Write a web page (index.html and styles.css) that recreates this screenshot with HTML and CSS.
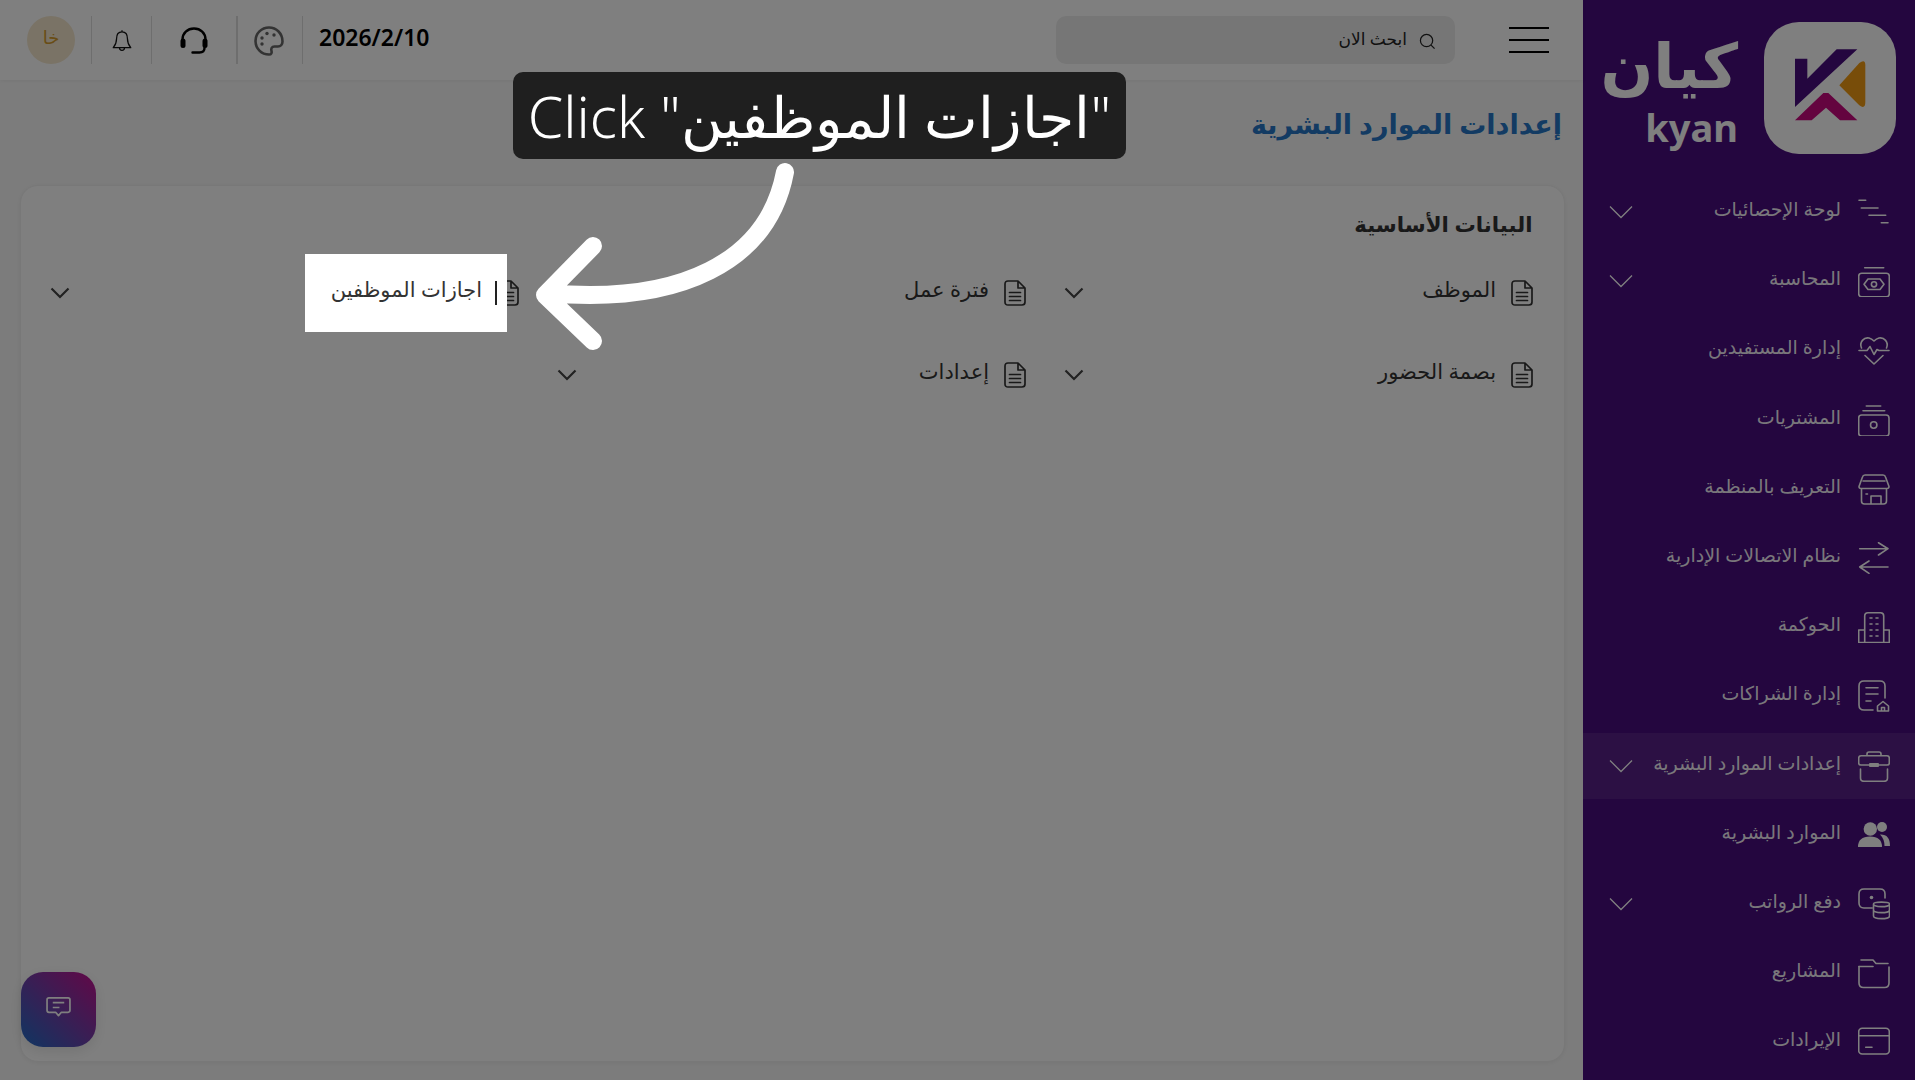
FILE: index.html
```html
<!DOCTYPE html>
<html lang="ar" dir="rtl">
<head>
    <meta charset="UTF-8">
    <meta name="viewport" content="width=device-width, initial-scale=1.0">
    <title>kyan</title>
    <link rel="stylesheet" href="styles.css">
</head>
<body>
    <div class="layout">
        <aside class="sidebar">
            <div class="brand">
                <svg class="brand-mark" viewBox="552 65 396 396">
                    <rect x="552" y="65" width="396" height="396" rx="105" fill="#fff"/>
                    <polygon points="645,175 682,175 682,235 770,147 832,147 645,320" fill="#480c7e"/>
                    <path d="M778 255 L838 188 Q856 175 856 195 V305 Q856 328 838 315 Z" fill="#f09a12"/>
                    <polygon points="645,360 730,278 745,278 832,360 780,360 738,322 695,360" fill="#c8087e"/>
                </svg>
                <div class="brand-name">
                    <span class="brand-ar">كيان</span>
                    <span class="brand-en">kyan</span>
                </div>
            </div>
            <nav class="menu">
                <a class="menu-item">
                    <svg class="menu-icon" viewBox="0 0 32 32"><path d="M1 4.3H7.7M3.3 12H20M11 19.3H27.7M23.3 26.7H30"/></svg>
                    <span class="menu-label">لوحة الإحصائيات</span>
                    <svg class="menu-arrow" viewBox="0 0 24 14"><path d="M1 1.5L12 12.5L23 1.5"/></svg>
                </a>
                <a class="menu-item">
                    <svg class="menu-icon" viewBox="0 0 32 32"><path d="M6.7 2.7H25.7M6 19.3L10 14H22L26 19.3L22 24.5H10Z"/><rect x="0.7" y="8.3" width="30.6" height="23.4" rx="3"/><circle cx="16" cy="19.3" r="2.6"/></svg>
                    <span class="menu-label">المحاسبة</span>
                    <svg class="menu-arrow" viewBox="0 0 24 14"><path d="M1 1.5L12 12.5L23 1.5"/></svg>
                </a>
                <a class="menu-item">
                    <svg class="menu-icon" viewBox="0 0 32 32"><path d="M3.5 14C1 8 6 3 11 4C13 4.5 15 6 16 7C17 6 19 4.5 21 4C26 3 31 8 28.5 14M1 16.5H9L12 12.5L16 20.5L19 15.5L21 16.5H31M7 21.5L16 30L25 21.5"/></svg>
                    <span class="menu-label">إدارة المستفيدين</span>
                </a>
                <a class="menu-item">
                    <svg class="menu-icon" viewBox="0 0 32 32"><path d="M8.3 2H22.7M5 6.7H26.7"/><rect x="0.7" y="11" width="30.3" height="21" rx="3"/><circle cx="15.7" cy="21" r="3.2"/></svg>
                    <span class="menu-label">المشتريات</span>
                </a>
                <a class="menu-item">
                    <svg class="menu-icon" viewBox="0 0 32 32"><path d="M7 2H25Q27 2 27.5 4L31 13.5Q31 15.5 29 15.5H3Q1 15.5 1 13.5L4.500 4Q5 2 7 2ZM5 8H27M3.500 15.500V28Q3.500 31 6.500 31H25.500Q28.500 31 28.500 28V15.500M13 31V23H23V31M8 21H9.500"/></svg>
                    <span class="menu-label">التعريف بالمنظمة</span>
                </a>
                <a class="menu-item">
                    <svg class="menu-icon" viewBox="0 0 32 32"><path d="M1.700 6.700H30L20.500 0.700M30 6.700L20.500 13M30 25H1.700L11 19M1.700 25L11 31.300"/></svg>
                    <span class="menu-label">نظام الاتصالات الإدارية</span>
                </a>
                <a class="menu-item">
                    <svg class="menu-icon" viewBox="0 0 32 32"><path d="M6.700 31.500V5Q6.700 1.700 10 1.700H22.500Q25.700 1.700 25.700 5V31.500M0.700 31.500H31.300M0.700 31.500V19H6.700M31.300 31.500V19H25.700"/><path class="dash" d="M12 7H20M12 13H20M12 19H20M12 25H20"/></svg>
                    <span class="menu-label">الحوكمة</span>
                </a>
                <a class="menu-item">
                    <svg class="menu-icon" viewBox="0 0 32 32"><path d="M27 18V6Q27 1 22 1H6Q1 1 1 6V25Q1 30 6 30H15M8 7.700H20M8 14H20M8 21H13M19.500 31V26L25 21.500L30.500 26V31ZM23.500 31V27.500H26.500V31"/></svg>
                    <span class="menu-label">إدارة الشراكات</span>
                </a>
                <a class="menu-item menu-item-active">
                    <svg class="menu-icon" viewBox="0 0 32 32"><path d="M9 5.700V4Q9 2 11 2H21Q23 2 23 4V5.700M11 15H3Q0.700 15 0.700 13V8Q0.700 5.700 3 5.700H29Q31.300 5.700 31.300 8V13Q31.300 15 29 15H21M2.500 19V28Q2.500 31.300 6 31.300H26Q29.500 31.300 29.500 28V19"/><rect class="fill" x="11" y="13" width="10" height="4" rx="1"/></svg>
                    <span class="menu-label">إعدادات الموارد البشرية</span>
                    <svg class="menu-arrow" viewBox="0 0 24 14"><path d="M1 1.500L12 12.500L23 1.500"/></svg>
                </a>
                <a class="menu-item">
                    <svg class="menu-icon" viewBox="0 0 32 32"><circle class="fill" cx="12.300" cy="10" r="6.700"/><circle class="fill" cx="24" cy="8" r="5"/><path class="fill" d="M0 28Q0 17.500 12 17.500Q24 17.500 24 28ZM22 15.500Q32 15 32 27H26.500Q26.500 20 22 15.500Z"/></svg>
                    <span class="menu-label">الموارد البشرية</span>
                </a>
                <a class="menu-item">
                    <svg class="menu-icon" viewBox="0 0 32 32"><path d="M14 20H6Q1 20 1 15V6Q1 1 6 1H22Q27 1 27 6V10M15.500 16C15.500 13.500 31.500 13.500 31.500 16C31.500 19.500 15.500 19.500 15.500 16ZM15.500 16V28C15.500 31.500 31.500 31.500 31.500 28V16M15.500 22C15.500 25.500 31.500 25.500 31.500 22"/><circle class="fill" cx="13.500" cy="9.500" r="1.800"/></svg>
                    <span class="menu-label">دفع الرواتب</span>
                    <svg class="menu-arrow" viewBox="0 0 24 14"><path d="M1 1.500L12 12.500L23 1.500"/></svg>
                </a>
                <a class="menu-item">
                    <svg class="menu-icon" viewBox="0 0 32 32"><path d="M3 3H15L18 6.500H30M1 9.500V26Q1 30.500 5.500 30.500H26.500Q31 30.500 31 26V10"/><path d="M1 9.500H15"/></svg>
                    <span class="menu-label">المشاريع</span>
                </a>
                <a class="menu-item">
                    <svg class="menu-icon" viewBox="0 0 32 32"><rect x="0.700" y="2.300" width="30.600" height="25.700" rx="3.500"/><path d="M0.700 9.700H31.300M7.700 21.300H14"/></svg>
                    <span class="menu-label">الإيرادات</span>
                </a>
            </nav>
        </aside>

        <div class="main">
            <header class="topbar">
                <div class="topbar-right">
                    <div class="burger"><i></i><i></i><i></i></div>
                    <div class="search">
                        <svg class="search-icon" viewBox="0 0 18 18"><circle cx="8" cy="8" r="6.500"/><path d="M12.800 12.800L16.500 16.500"/></svg>
                        <span class="search-text">ابحث الان</span>
                    </div>
                </div>
                <div class="topbar-left">
                    <div class="date" dir="ltr">2026/2/10</div>
                    <div class="tool tool-palette">
                        <svg viewBox="0 0 30 30" width="30" height="30">
                            <path class="palette" d="M15 1.500C7.500 1.500 1.500 7.500 1.500 15C1.500 22.500 7.500 28.500 15 28.500C17.500 28.500 18 26.500 17.500 25C16.800 23 17.500 20.500 20.500 20.500H24C26.500 20.500 28.500 18.500 28.500 15.500C28.500 7.500 22.500 1.500 15 1.500Z"/>
                            <circle cx="8" cy="12" r="1.700"/><circle cx="8" cy="18" r="1.700"/><circle cx="13" cy="7.500" r="1.700"/><circle cx="20" cy="9" r="1.700"/>
                        </svg>
                    </div>
                    <div class="tool tool-support">
                        <svg viewBox="0 0 30 30" width="30" height="30">
                            <path class="headset" d="M3.500 19V13.500C3.500 7 8.500 2.500 15 2.500C21.500 2.500 26.500 7 26.500 13.500V19"/>
                            <rect x="1.500" y="12.500" width="5" height="9.500" rx="2.500"/>
                            <rect x="23.500" y="12.500" width="5" height="9.500" rx="2.500"/>
                            <path class="headset" d="M25.500 22C25.500 25 24 26.500 20.500 26.500H13.500"/>
                        </svg>
                    </div>
                    <div class="tool tool-bell">
                        <svg viewBox="0 0 24 28" width="20" height="24">
                            <path d="M12 3C7.500 3 5.500 6.500 5.500 11C5.500 16 4 19 1.500 22H22.500C20 19 18.500 16 18.500 11C18.500 6.500 16.500 3 12 3ZM12 1V3M9 22.500C9 26 15 26 15 22.500"/>
                        </svg>
                    </div>
                    <div class="avatar">خا</div>
                </div>
            </header>

            <div class="page-head">
                <h1 class="page-title">إعدادات الموارد البشرية</h1>
            </div>

            <section class="card">
                <h2 class="card-title">البيانات الأساسية</h2>
                <div class="grid">
                    <div class="item">
                        <svg class="doc" viewBox="0 0 22 26"><path d="M4 1H14L21 8V22Q21 25 18 25H4Q1 25 1 22V4Q1 1 4 1ZM14 1V8H21M5.500 12.500H16.500M5.500 16.500H16.500M5.500 20.500H16.500"/></svg>
                        <span class="item-label">الموظف</span>
                        <svg class="chev" viewBox="0 0 20 12"><path d="M1.500 1.500L10 10L18.500 1.500"/></svg>
                    </div>
                    <div class="item">
                        <svg class="doc" viewBox="0 0 22 26"><path d="M4 1H14L21 8V22Q21 25 18 25H4Q1 25 1 22V4Q1 1 4 1ZM14 1V8H21M5.500 12.500H16.500M5.500 16.500H16.500M5.500 20.500H16.500"/></svg>
                        <span class="item-label">فترة عمل</span>
                        <svg class="chev" viewBox="0 0 20 12"><path d="M1.500 1.500L10 10L18.500 1.500"/></svg>
                    </div>
                    <div class="item item-focus">
                        <svg class="doc" viewBox="0 0 22 26"><path d="M4 1H14L21 8V22Q21 25 18 25H4Q1 25 1 22V4Q1 1 4 1ZM14 1V8H21M5.500 12.500H16.500M5.500 16.500H16.500M5.500 20.500H16.500"/></svg>
                        <span class="item-label">اجازات الموظفين</span>
                        <i class="caret"></i>
                        <svg class="chev" viewBox="0 0 20 12"><path d="M1.500 1.500L10 10L18.500 1.500"/></svg>
                    </div>
                    <div class="item">
                        <svg class="doc" viewBox="0 0 22 26"><path d="M4 1H14L21 8V22Q21 25 18 25H4Q1 25 1 22V4Q1 1 4 1ZM14 1V8H21M5.500 12.500H16.500M5.500 16.500H16.500M5.500 20.500H16.500"/></svg>
                        <span class="item-label">بصمة الحضور</span>
                        <svg class="chev" viewBox="0 0 20 12"><path d="M1.500 1.500L10 10L18.500 1.500"/></svg>
                    </div>
                    <div class="item">
                        <svg class="doc" viewBox="0 0 22 26"><path d="M4 1H14L21 8V22Q21 25 18 25H4Q1 25 1 22V4Q1 1 4 1ZM14 1V8H21M5.500 12.500H16.500M5.500 16.500H16.500M5.500 20.500H16.500"/></svg>
                        <span class="item-label">إعدادات</span>
                        <svg class="chev" viewBox="0 0 20 12"><path d="M1.500 1.500L10 10L18.500 1.500"/></svg>
                    </div>
                </div>
            </section>
        </div>
    </div>

    <button class="chat-btn">
        <svg viewBox="0 0 26 22" width="25" height="21"><path d="M3 1H23Q25 1 25 3V14Q25 16 23 16H16L13 19.500L10 16H3Q1 16 1 14V3Q1 1 3 1ZM7 6H19M7 11H14"/></svg>
    </button>

    <!-- tour overlay -->
    <div class="spot"></div>
    <div class="tip" dir="ltr">Click "اجازات الموظفين"</div>
    <svg class="tour-arrow" viewBox="0 0 1915 1080">
        <path d="M785 172C768 262 680 305 547 293M593 246L545 295L593 341"/>
    </svg>
</body>
</html>
```

FILE: styles.css
```css
* {
    margin: 0;
    padding: 0;
    box-sizing: border-box;
}

html, body {
    height: 100%;
    overflow: hidden;
}

body {
    position: relative;
    font-family: "Noto Sans", "DejaVu Sans", sans-serif;
    background: #f9f9f9;
    color: #333;
}

.layout {
    display: flex;
    height: 1080px;
}

/* sidebar */
.sidebar {
    width: 332px;
    flex-shrink: 0;
    background: #480c7e;
    color: #fff;
    overflow: hidden;
}

.brand {
    height: 179px;
    display: flex;
    align-items: flex-start;
    padding: 22px 19px 0 0;
    gap: 26px;
}

.brand-mark {
    width: 132px;
    height: 132px;
    flex-shrink: 0;
}

.brand-name {
    display: flex;
    flex-direction: column;
    align-items: flex-start;
    color: #fff;
    font-weight: 700;
}

.brand-ar {
    font-size: 62px;
    line-height: 84px;
}

.brand-en {
    font-size: 38px;
    line-height: 42px;
}

.menu {
    display: flex;
    flex-direction: column;
    gap: 3.2px;
}

.menu-item {
    height: 66px;
    flex-shrink: 0;
    display: flex;
    align-items: center;
    padding: 0 25px 0 26px;
    gap: 17px;
}

.menu-item-active {
    background: rgba(255, 255, 255, 0.09);
}

.menu-icon {
    width: 32px;
    height: 32px;
    flex-shrink: 0;
    fill: none;
    stroke: #fff;
    stroke-width: 1.6;
    stroke-linecap: round;
    stroke-linejoin: round;
}

.menu-icon .fill {
    fill: #fff;
    stroke: none;
}

.menu-icon .dash {
    stroke-dasharray: 2 4;
}

.menu-label {
    font-size: 19px;
    color: rgba(255, 255, 255, 0.95);
    margin-top: -6px;
}

.menu-arrow {
    width: 24px;
    height: 14px;
    margin-right: auto;
    fill: none;
    stroke: #fff;
    stroke-width: 1.3;
}

/* main */
.main {
    flex: 1;
    display: flex;
    flex-direction: column;
    min-width: 0;
}

.topbar {
    height: 80px;
    flex-shrink: 0;
    display: flex;
    justify-content: space-between;
    align-items: center;
    background: #fff;
    padding: 0 34px 0 27px;
    box-shadow: 0 1px 4px rgba(0, 0, 0, 0.06);
}

.topbar-right {
    display: flex;
    align-items: center;
    gap: 54px;
}

.burger {
    width: 40px;
    display: flex;
    flex-direction: column;
    gap: 10.5px;
}

.burger i {
    display: block;
    height: 1.5px;
    background: #000;
}

.search {
    width: 399px;
    height: 48px;
    background: #ededed;
    border-radius: 10px;
    display: flex;
    align-items: center;
    padding-right: 19px;
    gap: 12px;
    font-size: 17px;
    color: #222;
}

.search-text {
    margin-top: -4px;
}

.search-icon {
    width: 17px;
    height: 17px;
    margin-top: 3px;
    fill: none;
    stroke: #222;
    stroke-width: 1.3;
}

.topbar-left {
    display: flex;
    align-items: center;
}

.date {
    font-size: 23px;
    font-weight: 600;
    color: #000;
    margin: -7px 0 0 16px;
}

.tool {
    height: 48px;
    display: flex;
    align-items: center;
    justify-content: center;
    border-right: 1px solid #ddd;
}

.tool svg {
    margin-top: 2px;
}

.tool-palette {
    width: 65px;
}

.tool-palette svg {
    fill: #666;
    margin-right: 2px;
}

.palette {
    fill: none;
    stroke: #666;
    stroke-width: 2.6;
}

.tool-support {
    width: 86px;
    border-right-width: 2px;
}

.tool-support svg {
    fill: #000;
}

.headset {
    fill: none;
    stroke: #000;
    stroke-width: 2.4;
    stroke-linecap: round;
}

.tool-bell {
    width: 61px;
    border-left: 1px solid #ddd;
}

.tool-bell svg {
    fill: none;
    stroke: #111;
    stroke-width: 1.5;
    stroke-linejoin: round;
}

.avatar {
    width: 48px;
    height: 48px;
    margin-right: 16px;
    border-radius: 50%;
    background: #f4e7cd;
    color: #d39a2b;
    display: flex;
    align-items: center;
    justify-content: center;
    font-size: 18px;
    padding-bottom: 6px;
}

.page-head {
    height: 105px;
    flex-shrink: 0;
    padding: 21px 21px 0 0;
}

.page-title {
    font-size: 27px;
    font-weight: 600;
    color: #2777c7;
    line-height: 46px;
}

.card {
    flex: 1;
    margin: 0 18px 18px 20px;
    background: #fff;
    border: 1px solid #f0f0f0;
    border-radius: 18px;
    box-shadow: 0 1px 5px rgba(0, 0, 0, 0.06);
    padding: 19px 31.5px 0 0;
}

.card-title {
    font-size: 21.3px;
    font-weight: 600;
    color: #333;
    line-height: 38px;
}

.grid {
    display: grid;
    grid-template-columns: repeat(3, 468.5px);
    column-gap: 38.5px;
    row-gap: 42px;
    margin-top: 30px;
}

.item {
    position: relative;
    height: 40px;
    display: flex;
    align-items: center;
    gap: 14.5px;
}

.doc {
    width: 22px;
    height: 26px;
    fill: none;
    stroke: #333;
    stroke-width: 1.7;
    stroke-linejoin: round;
    stroke-linecap: round;
}

.item-label {
    position: relative;
    font-size: 21px;
    color: #333;
    margin-top: -9px;
}

.chev {
    width: 20px;
    height: 12px;
    margin-right: auto;
    fill: none;
    stroke: #444;
    stroke-width: 2.2;
}

/* the highlighted step: white patch sits over the icon, under the label */
.item-focus::before {
    content: "";
    position: absolute;
    top: -19px;
    right: 11.5px;
    width: 202px;
    height: 78px;
    background: #fff;
}

.caret {
    position: absolute;
    top: 8px;
    right: 22px;
    width: 2px;
    height: 24px;
    background: #222;
}

.chat-btn {
    position: absolute;
    left: 21px;
    bottom: 33px;
    width: 75px;
    height: 75px;
    border: 0;
    border-radius: 22px;
    background: linear-gradient(45deg, #1f6cc4, #c4108f);
    display: flex;
    align-items: center;
    justify-content: center;
    padding-bottom: 4px;
    box-shadow: 0 4px 14px rgba(0, 0, 0, 0.1);
}

.chat-btn svg {
    fill: none;
    stroke: #fff;
    stroke-width: 1.8;
    stroke-linejoin: round;
}

/* tour overlay */
.spot {
    position: absolute;
    left: 305px;
    top: 254px;
    width: 202px;
    height: 78px;
    box-shadow: 0 0 0 2200px rgba(0, 0, 0, 0.5);
}

.tip {
    position: absolute;
    left: 513px;
    top: 72px;
    width: 613px;
    height: 87px;
    background: #1f1f1f;
    border-radius: 10px;
    color: #fff;
    font-size: 57px;
    font-weight: 300;
    line-height: 88px;
    text-align: center;
    white-space: nowrap;
    overflow: hidden;
}

.tour-arrow {
    position: absolute;
    left: 0;
    top: 0;
    width: 1915px;
    height: 1080px;
    fill: none;
    stroke: #fff;
    stroke-width: 18;
    stroke-linecap: round;
    stroke-linejoin: round;
    pointer-events: none;
}
```
